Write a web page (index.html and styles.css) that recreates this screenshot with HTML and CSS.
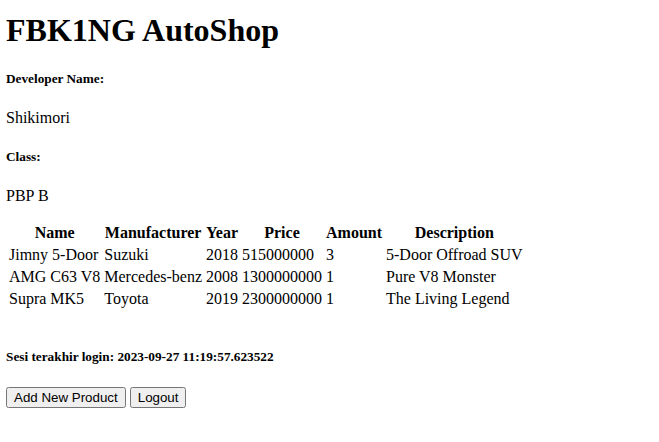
FILE: index.html
```html
<!DOCTYPE html>
<html>
<head>
<meta charset="utf-8">
<title>FBK1NG AutoShop</title>
<link rel="stylesheet" href="styles.css">
</head>
<body class="page">
<h1 class="title">FBK1NG AutoShop</h1>
<h5 class="label">Developer Name:</h5>
<p class="value">Shikimori</p>
<h5 class="label">Class:</h5>
<p class="value">PBP B</p>
<table class="products">
<tr><th>Name</th><th>Manufacturer</th><th>Year</th><th>Price</th><th>Amount</th><th>Description</th></tr>
<tr><td>Jimny 5-Door</td><td>Suzuki</td><td>2018</td><td>515000000</td><td>3</td><td>5-Door Offroad SUV</td></tr>
<tr><td>AMG C63 V8</td><td>Mercedes-benz</td><td>2008</td><td>1300000000</td><td>1</td><td>Pure V8 Monster</td></tr>
<tr><td>Supra MK5</td><td>Toyota</td><td>2019</td><td>2300000000</td><td>1</td><td>The Living Legend</td></tr>
</table>
<br>
<h5 class="label session">Sesi terakhir login: 2023-09-27 11:19:57.623522</h5>
<a class="btn-link" href="#add"><button class="btn">Add New Product</button></a>
<a class="btn-link" href="#logout"><button class="btn">Logout</button></a>
</body>
</html>
```
FILE: styles.css
```css
.page {
  font-family: "Liberation Serif", "Times New Roman", serif;
  color: #000;
  background: #fff;
  margin: 0 6px 8px;
}
.title {
  margin-top: 11.5px;
}
.session {
  margin-top: 20px;
}
.btn-link {
  color: #551a8b;
}
.btn {
  font-family: "Liberation Sans", Arial, sans-serif;
  font-size: 13.333px;
}
```
